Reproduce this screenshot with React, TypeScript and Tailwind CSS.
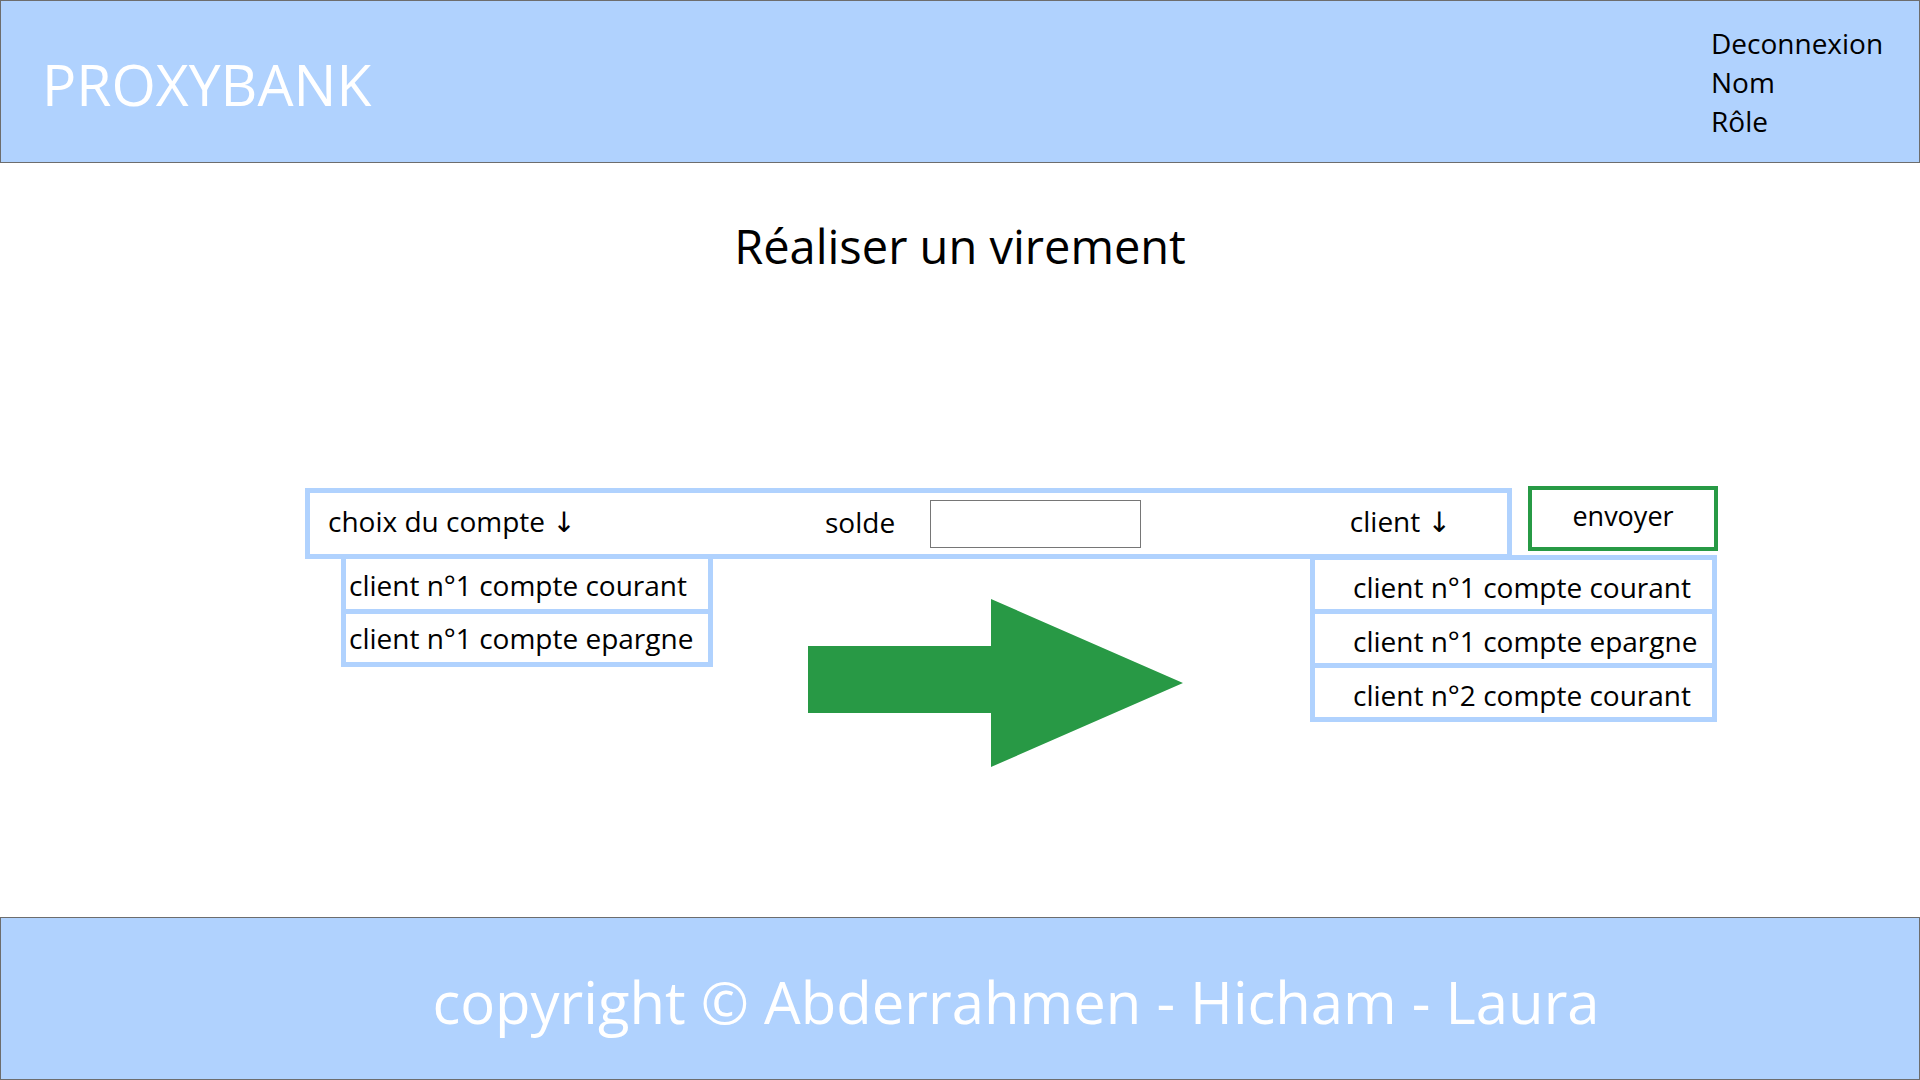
import React from 'react'

const font = { fontFamily: '"Open Sans", "Noto Sans", sans-serif' }

function ArrowRight() {
  return (
    <svg width="375" height="168" viewBox="0 0 375 168" className="block">
      <polygon points="0,47 183,47 183,0 375,84 183,168 183,114 0,114" fill="#289945" />
    </svg>
  )
}

function Down() {
  return <span className="text-black" style={{ fontFamily: '"DejaVu Sans", sans-serif' }}>↓</span>
}

export default function App() {
  const leftItems = ['client n°1 compte courant', 'client n°1 compte epargne']
  const rightItems = ['client n°1 compte courant', 'client n°1 compte epargne', 'client n°2 compte courant']

  return (
    <div className="h-screen w-full flex flex-col bg-white text-black" style={font}>
      <header className="h-[163px] shrink-0 flex items-start justify-between border border-[#6d6d6d] bg-[#b0d2fe]">
        <h1 className="mt-[55px] ml-[41px] text-[57px] leading-none text-white font-normal">PROXYBANK</h1>
        <nav className="mt-[23px] mr-[32px] w-[176px] flex flex-col text-[28px] leading-[39px]">
          <a>Deconnexion</a>
          <a>Nom</a>
          <a>Rôle</a>
        </nav>
      </header>

      <main className="flex-1 flex flex-col">
        <h2 className="mt-[60px] text-center text-[47px] leading-none font-normal">Réaliser un virement</h2>

        <div className="mt-[218px] ml-[305px] flex items-start">
          <div className="w-[1207px] h-[71px] border-[5px] border-[#b0d2fe] flex items-center text-[28px]">
            <div className="w-[515px] pl-[18px] pb-[4px]">choix du compte <Down /></div>
            <div className="w-[105px] pb-[4px]">solde</div>
            <input className="w-[211px] h-[48px] border border-[#767676] outline-none" />
            <div className="flex-1 flex justify-end pr-[56px] pb-[4px]">
              <span>client <Down /></span>
            </div>
          </div>
          <button className="ml-[16px] -mt-[2px] w-[190px] h-[65px] border-[4px] border-[#279a45] text-[27px] leading-none pb-[6px] bg-white">
            envoyer
          </button>
        </div>

        <div className="ml-[341px] flex items-start">
          <ul className="w-[372px] border-x-[5px] border-b-[5px] border-[#b0d2fe] text-[28px]">
            {leftItems.map((item, i) => (
              <li key={item} className={i === 0 ? 'h-[50px] flex items-center pl-[3px] pt-[2px]' : 'h-[53px] border-t-[5px] border-[#b0d2fe] flex items-center pl-[3px]'}>
                {item}
              </li>
            ))}
          </ul>

          <div className="ml-[95px] mt-[40px]">
            <ArrowRight />
          </div>

          <ul className="ml-[127px] -mt-[4px] w-[407px] border-[5px] border-[#b0d2fe] text-[28px]">
            {rightItems.map((item, i) => (
              <li key={item} className={i === 0 ? 'h-[49px] flex items-center pl-[38px] pt-[4px]' : 'h-[54px] border-t-[5px] border-[#b0d2fe] flex items-center pl-[38px] pt-[4px]'}>
                {item}
              </li>
            ))}
          </ul>
        </div>
      </main>

      <footer className="h-[163px] shrink-0 flex items-center justify-center pl-[112px] border border-[#6d6d6d] bg-[#b0d2fe]">
        <p className="text-[58px] leading-none text-white pt-[6px]">copyright © Abderrahmen - Hicham - Laura</p>
      </footer>
    </div>
  )
}
